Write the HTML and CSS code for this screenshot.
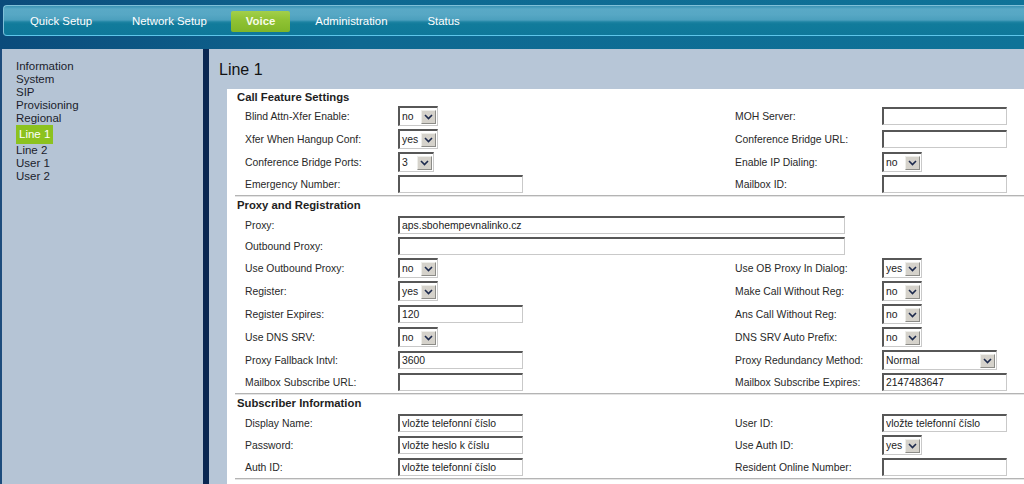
FILE: index.html
```html
<!DOCTYPE html>
<html>
<head>
<meta charset="utf-8">
<title>Line 1</title>
<link rel="stylesheet" href="styles.css">
</head>
<body>
<div class="header">
  <div class="nav">
    <span class="nav-item">Quick Setup</span>
    <span class="nav-item">Network Setup</span>
    <span class="nav-item nav-current"><span class="nav-btn">Voice</span></span>
    <span class="nav-item">Administration</span>
    <span class="nav-item">Status</span>
  </div>
</div>
<div class="page">
  <div class="sidebar">
    <ul class="menu">
      <li>Information</li>
      <li>System</li>
      <li>SIP</li>
      <li>Provisioning</li>
      <li>Regional</li>
      <li class="active">Line 1</li>
      <li>Line 2</li>
      <li>User 1</li>
      <li>User 2</li>
    </ul>
  </div>
  <div class="main">
    <h1 class="title">Line 1</h1>
    <div class="content">
      <div class="section-title">Call Feature Settings</div>
      <table class="form">
        <colgroup><col class="c1"><col class="c2"><col class="c3"><col class="c4"></colgroup>
        <tr>
          <td>Blind Attn-Xfer Enable:</td>
          <td><div class="ctl"><span class="sel">no<span class="arr"><svg width="9" height="6" viewBox="0 0 9 6"><path d="M1 1L4.5 4.5L8 1" /></svg></span></span></div></td>
          <td>MOH Server:</td>
          <td><div class="ctl"><input class="txt" type="text" value=""></div></td>
        </tr>
        <tr>
          <td>Xfer When Hangup Conf:</td>
          <td><div class="ctl"><span class="sel">yes<span class="arr"><svg width="9" height="6" viewBox="0 0 9 6"><path d="M1 1L4.5 4.5L8 1" /></svg></span></span></div></td>
          <td>Conference Bridge URL:</td>
          <td><div class="ctl"><input class="txt" type="text" value=""></div></td>
        </tr>
        <tr>
          <td>Conference Bridge Ports:</td>
          <td><div class="ctl"><span class="sel sel-num">3<span class="arr"><svg width="9" height="6" viewBox="0 0 9 6"><path d="M1 1L4.5 4.5L8 1" /></svg></span></span></div></td>
          <td>Enable IP Dialing:</td>
          <td><div class="ctl"><span class="sel">no<span class="arr"><svg width="9" height="6" viewBox="0 0 9 6"><path d="M1 1L4.5 4.5L8 1" /></svg></span></span></div></td>
        </tr>
        <tr>
          <td>Emergency Number:</td>
          <td><div class="ctl"><input class="txt" type="text" value=""></div></td>
          <td>Mailbox ID:</td>
          <td><div class="ctl"><input class="txt" type="text" value=""></div></td>
        </tr>
      </table>
      <div class="sep"></div>
      <div class="section-title">Proxy and Registration</div>
      <table class="form">
        <colgroup><col class="c1"><col class="c2"><col class="c3"><col class="c4"></colgroup>
        <tr>
          <td>Proxy:</td>
          <td colspan="3"><div class="ctl"><input class="txt txt-wide" type="text" value="aps.sbohempevnalinko.cz"></div></td>
        </tr>
        <tr>
          <td>Outbound Proxy:</td>
          <td colspan="3"><div class="ctl"><input class="txt txt-wide" type="text" value=""></div></td>
        </tr>
        <tr>
          <td>Use Outbound Proxy:</td>
          <td><div class="ctl"><span class="sel">no<span class="arr"><svg width="9" height="6" viewBox="0 0 9 6"><path d="M1 1L4.5 4.5L8 1" /></svg></span></span></div></td>
          <td>Use OB Proxy In Dialog:</td>
          <td><div class="ctl"><span class="sel">yes<span class="arr"><svg width="9" height="6" viewBox="0 0 9 6"><path d="M1 1L4.5 4.5L8 1" /></svg></span></span></div></td>
        </tr>
        <tr>
          <td>Register:</td>
          <td><div class="ctl"><span class="sel">yes<span class="arr"><svg width="9" height="6" viewBox="0 0 9 6"><path d="M1 1L4.5 4.5L8 1" /></svg></span></span></div></td>
          <td>Make Call Without Reg:</td>
          <td><div class="ctl"><span class="sel">no<span class="arr"><svg width="9" height="6" viewBox="0 0 9 6"><path d="M1 1L4.5 4.5L8 1" /></svg></span></span></div></td>
        </tr>
        <tr>
          <td>Register Expires:</td>
          <td><div class="ctl"><input class="txt" type="text" value="120"></div></td>
          <td>Ans Call Without Reg:</td>
          <td><div class="ctl"><span class="sel">no<span class="arr"><svg width="9" height="6" viewBox="0 0 9 6"><path d="M1 1L4.5 4.5L8 1" /></svg></span></span></div></td>
        </tr>
        <tr>
          <td>Use DNS SRV:</td>
          <td><div class="ctl"><span class="sel">no<span class="arr"><svg width="9" height="6" viewBox="0 0 9 6"><path d="M1 1L4.5 4.5L8 1" /></svg></span></span></div></td>
          <td>DNS SRV Auto Prefix:</td>
          <td><div class="ctl"><span class="sel">no<span class="arr"><svg width="9" height="6" viewBox="0 0 9 6"><path d="M1 1L4.5 4.5L8 1" /></svg></span></span></div></td>
        </tr>
        <tr>
          <td>Proxy Fallback Intvl:</td>
          <td><div class="ctl"><input class="txt" type="text" value="3600"></div></td>
          <td>Proxy Redundancy Method:</td>
          <td><div class="ctl"><span class="sel sel-wide">Normal<span class="arr"><svg width="9" height="6" viewBox="0 0 9 6"><path d="M1 1L4.5 4.5L8 1" /></svg></span></span></div></td>
        </tr>
        <tr>
          <td>Mailbox Subscribe URL:</td>
          <td><div class="ctl"><input class="txt" type="text" value=""></div></td>
          <td>Mailbox Subscribe Expires:</td>
          <td><div class="ctl"><input class="txt" type="text" value="2147483647"></div></td>
        </tr>
      </table>
      <div class="sep"></div>
      <div class="section-title">Subscriber Information</div>
      <table class="form">
        <colgroup><col class="c1"><col class="c2"><col class="c3"><col class="c4"></colgroup>
        <tr>
          <td>Display Name:</td>
          <td><div class="ctl"><input class="txt" type="text" value="vložte telefonní číslo"></div></td>
          <td>User ID:</td>
          <td><div class="ctl"><input class="txt" type="text" value="vložte telefonní číslo"></div></td>
        </tr>
        <tr>
          <td>Password:</td>
          <td><div class="ctl"><input class="txt" type="text" value="vložte heslo k číslu"></div></td>
          <td>Use Auth ID:</td>
          <td><div class="ctl"><span class="sel">yes<span class="arr"><svg width="9" height="6" viewBox="0 0 9 6"><path d="M1 1L4.5 4.5L8 1" /></svg></span></span></div></td>
        </tr>
        <tr>
          <td>Auth ID:</td>
          <td><div class="ctl"><input class="txt" type="text" value="vložte telefonní číslo"></div></td>
          <td>Resident Online Number:</td>
          <td><div class="ctl"><input class="txt" type="text" value=""></div></td>
        </tr>
      </table>
      <div class="sep"></div>
      <div class="section-title">Supplementary Service Subscription</div>
    </div>
  </div>
</div>
</body>
</html>
```
FILE: styles.css
```css
html, body {
  margin: 0;
  padding: 0;
}
body {
  width: 1024px;
  height: 484px;
  overflow: hidden;
  font-family: "Liberation Sans", Arial, sans-serif;
  background: #0a2752;
}

/* ---------- header / top navigation ---------- */
.header {
  height: 49px;
  box-sizing: border-box;
  padding-top: 5px;
  background: linear-gradient(to right, #0b4b7b 0%, #0e6891 35%, #0f7398 100%);
}
.nav {
  display: flex;
  align-items: center;
  height: 31px;
  margin-left: 3px;
  padding-left: 6px;
  box-sizing: border-box;
  border: 1px solid #7fc0d8;
  border-right: 0;
  border-bottom: 1px solid #5ec6ea;
  border-radius: 4px 0 0 4px;
  background: linear-gradient(to bottom,
    #3a93b4 0px, #59a9c6 3px, #56a7c4 9px, #4b9fbd 14px,
    #1c83a2 16px, #117b9b 18px, #0f789a 100%);
}
.nav-item {
  padding: 0 20px;
  color: #ffffff;
  font-size: 11.4px;
  line-height: 14px;
  white-space: nowrap;
}
.nav-current {
  padding: 0 5px 0 4px;
}
.nav-btn {
  display: block;
  height: 21px;
  line-height: 21px;
  margin-top: 2px;
  padding: 0 15px 0 15px;
  border-radius: 2px;
  font-weight: bold;
  color: #f7fbe9;
  background: linear-gradient(to bottom, #a3cf4a 0%, #8fc233 45%, #80b628 100%);
}

/* ---------- page body ---------- */
.page {
  display: flex;
  height: 435px;
  background: linear-gradient(to right, #1d4c7d 0, #1d4c7d 2px, #0a2752 2px);
}
.sidebar {
  width: 201px;
  margin-left: 2px;
  padding: 11px 0 0 14px;
  box-sizing: border-box;
  background: #b5c4d5;
}
.menu {
  list-style: none;
  margin: 0;
  padding: 0;
  font-size: 11.5px;
  line-height: 13px;
  color: #1b1d2c;
}
.menu .active {
  width: fit-content;
  padding: 3px;
  color: #ffffff;
  background: #8cc21f;
}

.main {
  flex: 1;
  min-width: 0;
  margin-left: 6px;
  padding-top: 11px;
  display: flex;
  flex-direction: column;
  background: #b7c6d7;
}
.title {
  margin: 0 0 9px 10px;
  font-size: 16px;
  font-weight: normal;
  line-height: 20px;
  color: #121212;
}
.content {
  flex: 1;
  margin-left: 18px;
  background: #ffffff;
}
.section-title {
  padding-left: 10px;
  font-size: 11.3px;
  font-weight: bold;
  line-height: 16px;
  color: #1e1e1e;
  white-space: nowrap;
}
.sep + .section-title {
  padding-bottom: 2px;
}
.sep {
  margin-left: 8px;
  border-top: 1px solid #b4b4b4;
  border-bottom: 1px solid #e4e4e4;
}

/* ---------- form table ---------- */
.form {
  margin-left: 18px;
  width: 779px;
  border-collapse: collapse;
  table-layout: fixed;
}
.c1 { width: 153px; }
.c2 { width: 337px; }
.c3 { width: 147px; }
.c4 { width: 142px; }
.form td {
  padding: 1px 0 2px;
  vertical-align: middle;
  font-size: 10.4px;
  line-height: 13px;
  color: #282828;
  white-space: nowrap;
}
.ctl {
  display: flex;
  align-items: center;
}
.txt {
  box-sizing: border-box;
  width: 125px;
  height: 18px;
  margin: 0;
  padding: 0 0 0 2px;
  border-style: solid;
  border-width: 2px 1px 1px 2px;
  border-color: #575757 #c9c9c9 #c9c9c9 #575757;
  background: #ffffff;
  font-family: "Liberation Sans", Arial, sans-serif;
  font-size: 10.4px;
  color: #222222;
  outline: none;
}
.txt-wide {
  width: 447px;
}
.sel {
  display: flex;
  align-items: center;
  justify-content: space-between;
  box-sizing: border-box;
  width: 40px;
  height: 20px;
  padding-left: 2px;
  border-style: solid;
  border-width: 2px 1px 1px 2px;
  border-color: #575757 #c9c9c9 #c9c9c9 #575757;
  background: #ffffff;
  font-size: 10.4px;
  color: #222222;
}
.sel-num { width: 36px; }
.sel-wide { width: 115px; }
.arr {
  display: flex;
  align-items: center;
  justify-content: center;
  box-sizing: border-box;
  width: 15px;
  height: 14px;
  margin-right: 1px;
  border: 1px solid;
  border-color: #eeeeea #8c8c88 #8c8c88 #eeeeea;
  background: #d5d2cb;
}
.arr svg path {
  fill: none;
  stroke: #1d2a4d;
  stroke-width: 1.6;
}
```
